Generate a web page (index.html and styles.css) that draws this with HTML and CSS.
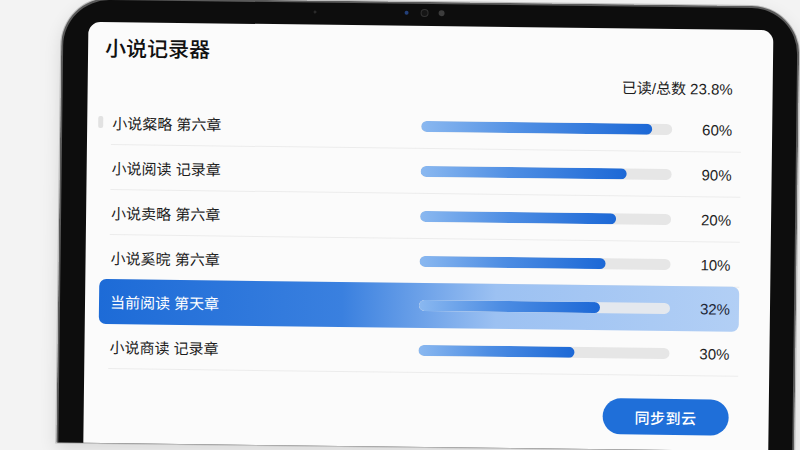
FILE: index.html
```html
<!DOCTYPE html>
<html lang="zh-CN">
  <head>
    <meta charset="UTF-8" />
    <meta name="viewport" content="width=device-width, initial-scale=1.0" />
    <title>小说记录器</title>
    <link rel="stylesheet" href="styles.css">
  </head>
  <body>
    <div class="tablet">
      <div class="bezel-top">
        <span class="dot mic"></span>
        <span class="dot sensor"></span>
        <span class="dot lens"></span>
        <span class="dot flood"></span>
      </div>
      <div class="screen">
        <h1 class="app-title">小说记录器</h1>
        <div class="summary">已读/总数 23.8%</div>
        <ul class="book-list">
          <li class="book">
            <span class="grip"></span>
            <span class="book-name">小说粲略 第六章</span>
            <span class="bar"><span class="fill" style="width: 92%"></span></span>
            <span class="pct">60%</span>
          </li>
          <li class="book">
            <span class="book-name">小说阅读 记录章</span>
            <span class="bar"><span class="fill" style="width: 82%"></span></span>
            <span class="pct">90%</span>
          </li>
          <li class="book">
            <span class="book-name">小说卖略 第六章</span>
            <span class="bar"><span class="fill" style="width: 78%"></span></span>
            <span class="pct">20%</span>
          </li>
          <li class="book">
            <span class="book-name">小说奚晥 第六章</span>
            <span class="bar"><span class="fill" style="width: 74%"></span></span>
            <span class="pct">10%</span>
          </li>
          <li class="book current">
            <span class="book-name">当前阅读 第天章</span>
            <span class="bar"><span class="fill" style="width: 72%"></span></span>
            <span class="pct">32%</span>
          </li>
          <li class="book">
            <span class="book-name">小说商读 记录章</span>
            <span class="bar"><span class="fill" style="width: 62%"></span></span>
            <span class="pct">30%</span>
          </li>
        </ul>
        <div class="actions">
          <button class="sync-btn">同步到云</button>
        </div>
      </div>
    </div>
  </body>
</html>
```

FILE: styles.css
```css
* {
  box-sizing: border-box;
}
html,
body {
  margin: 0;
  height: 100%;
}
body {
  background: #f3f3f3;
  overflow: hidden;
  font-family: "Liberation Sans", "Noto Sans CJK SC", sans-serif;
  color: #1d1d1d;
}

/* device frame, cut off at the bottom */
.tablet {
  width: 738px;
  height: 445px;
  margin: 2px 0 0 59px;
  padding: 0 24px 0 25px;
  background: #0d0d0d;
  border: 2px solid #5a5a5a;
  border-bottom: none;
  border-radius: 48px 48px 0 0;
  box-shadow: 0 0 0 1px #bdbdbd, 0 6px 18px rgba(0, 0, 0, 0.12);
  display: flex;
  flex-direction: column;
  transform: rotate(0.7deg);
}
.bezel-top {
  height: 22px;
  display: flex;
  align-items: center;
  padding: 0 0 4px 225px;
}
.dot {
  border-radius: 50%;
  flex-shrink: 0;
}
.mic {
  width: 3px;
  height: 3px;
  background: #2a2a2a;
  margin-right: 88px;
}
.sensor {
  width: 4px;
  height: 4px;
  background: #23407a;
  margin-right: 12px;
}
.lens {
  width: 8px;
  height: 8px;
  background: #151515;
  border: 1px solid #333;
  margin-right: 10px;
}
.flood {
  width: 6px;
  height: 6px;
  background: #3c3c3c;
}

/* app screen */
.screen {
  flex: 1;
  background: #fbfbfb;
  border-radius: 12px 12px 0 0;
  padding: 12px 31px 0 24px;
}
.app-title {
  margin: 0 0 0 -7px;
  font-size: 21px;
  font-weight: 500;
  line-height: 30px;
  color: #111;
}
.summary {
  margin-top: 8px;
  padding-right: 9px;
  font-size: 15px;
  line-height: 20px;
  text-align: right;
}
.book-list {
  list-style: none;
  margin: 8px 0 0;
  padding: 0;
}
.book {
  display: flex;
  align-items: center;
  height: 45px;
  padding-right: 9px;
  border-bottom: 1px solid #ececec;
  font-size: 15px;
}
.grip {
  width: 5px;
  height: 12px;
  border-radius: 2px;
  background: #e2e2e2;
  margin: 0 8px 0 -13px;
}
.book-name {
  flex: 1;
  padding-left: 1px;
}
.bar {
  width: 251px;
  height: 11px;
  border-radius: 6px;
  background: #e6e6e6;
  display: flex;
  overflow: hidden;
}
.fill {
  height: 100%;
  border-radius: 6px;
  background: linear-gradient(90deg, #8ab8f0, #4d8de3 45%, #1c68d6);
}
.pct {
  width: 60px;
  text-align: right;
  color: #1f1f1f;
}
.book.current {
  height: 45px;
  margin: -1px 0 0 -10px;
  padding-left: 10px;
  border-bottom: none;
  border-radius: 7px;
  background: linear-gradient(90deg, #1d6bd7 0%, #3a80df 38%, #9cc1f2 62%, #b2cff5 100%);
  color: #fff;
}
.book.current .bar {
  background: #e4e8ee;
}
.book.current .pct {
  color: #1e2735;
}

.actions {
  display: flex;
  justify-content: flex-end;
  padding-right: 9px;
  margin-top: 23px;
}
.sync-btn {
  width: 126px;
  height: 36px;
  border: none;
  border-radius: 18px;
  background: #1f6fd9;
  color: #fff;
  font-family: "Noto Sans CJK SC", sans-serif;
  font-size: 15px;
  font-weight: 500;
  letter-spacing: 0.5px;
  cursor: pointer;
}
```
